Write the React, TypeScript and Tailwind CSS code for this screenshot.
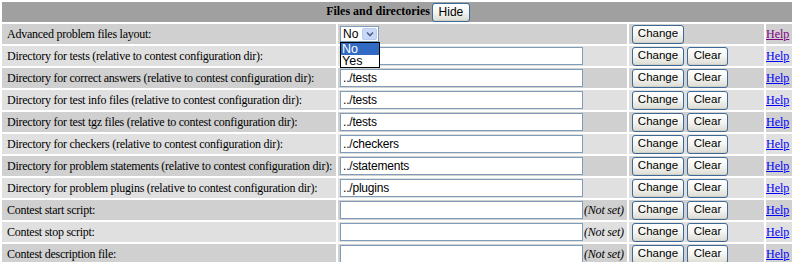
import React from "react";

type Row = {
  label: string;
  value: string;
  notSet?: boolean;
};

const rows: Row[] = [
  { label: "Directory for tests (relative to contest configuration dir):", value: "" },
  { label: "Directory for correct answers (relative to contest configuration dir):", value: "../tests" },
  { label: "Directory for test info files (relative to contest configuration dir):", value: "../tests" },
  { label: "Directory for test tgz files (relative to contest configuration dir):", value: "../tests" },
  { label: "Directory for checkers (relative to contest configuration dir):", value: "../checkers" },
  { label: "Directory for problem statements (relative to contest configuration dir):", value: "../statements" },
  { label: "Directory for problem plugins (relative to contest configuration dir):", value: "../plugins" },
  { label: "Contest start script:", value: "", notSet: true },
  { label: "Contest stop script:", value: "", notSet: true },
  { label: "Contest description file:", value: "", notSet: true },
];

function XpButton({ children, className = "" }: { children: React.ReactNode; className?: string }) {
  return (
    <button
      type="button"
      className={`h-[19px] rounded-[3px] border border-[#3d6a98] bg-gradient-to-b from-white via-[#f4f4f0] to-[#dcdcd4] p-0 align-middle font-['Liberation_Sans',Arial,sans-serif] text-[11.5px] font-normal leading-none tracking-normal text-black shadow-[inset_0_-1px_0_#cfcfc6] ${className}`}
    >
      {children}
    </button>
  );
}

function HelpLink({ visited }: { visited?: boolean }) {
  return (
    <a href="#" className={`whitespace-nowrap underline ${visited ? "text-[#800080]" : "text-[#0000ff]"}`}>
      Help
    </a>
  );
}

export default function App() {
  return (
    <div className="h-[262px] w-[800px] overflow-hidden bg-white font-['Liberation_Serif','Times_New_Roman',serif] text-[12px] text-black">
      <table className="w-[794px] table-fixed border-separate border-spacing-[2px]">
        <colgroup>
          <col className="w-[334px]" />
          <col className="w-[289px]" />
          <col className="w-[135px]" />
          <col className="w-[26px]" />
        </colgroup>
        <tbody>
          <tr>
            <td colSpan={4} className="h-[19px] bg-[#a0a0a0] p-0 pl-[2px] text-center align-middle font-bold">
              Files and directories
              <XpButton className="ml-[2px] w-[38px] text-[12px]">Hide</XpButton>
            </td>
          </tr>

          <tr className="bg-[#d0d0d0]">
            <td className="h-[20px] whitespace-nowrap p-0 pl-[5px] align-middle tracking-[-0.25px]">
              Advanced problem files layout:
            </td>
            <td className="p-0 pl-[2px] align-middle">
              <div className="relative h-[16px] w-[39px]">
                <div className="flex h-[16px] w-[39px] items-center border border-[#7f9db9] bg-white">
                  <span className="flex-1 pl-[2px] font-['Liberation_Sans',Arial,sans-serif] text-[12px] leading-none">No</span>
                  <span className="mr-[1px] flex h-[12px] w-[15px] items-center justify-center rounded-[2px] border border-[#b9c9ef] bg-[#c8d8fa]">
                    <svg width="8" height="6" viewBox="0 0 8 6">
                      <path d="M1 1.5 L4 4.5 L7 1.5" fill="none" stroke="#4d6185" strokeWidth="1.6" />
                    </svg>
                  </span>
                </div>
                <div className="absolute left-0 top-[16px] z-10 w-[40px] border border-black bg-white font-['Liberation_Sans',Arial,sans-serif] text-[12.5px] leading-[12px]">
                  <div className="bg-[#316ac5] pl-[1px] text-white">No</div>
                  <div className="pl-[1px]">Yes</div>
                </div>
              </div>
            </td>
            <td className="p-0 pl-[3px] align-middle">
              <XpButton className="w-[52px]">Change</XpButton>
            </td>
            <td className="p-0 align-middle">
              <HelpLink visited />
            </td>
          </tr>

          {rows.map((r, i) => (
            <tr key={r.label} className={i % 2 === 0 ? "bg-[#e0e0e0]" : "bg-[#d0d0d0]"}>
              <td className="h-[20px] whitespace-nowrap p-0 pl-[5px] align-middle tracking-[-0.25px]">{r.label}</td>
              <td className="whitespace-nowrap p-0 pl-[2px] align-middle">
                <input
                  type="text"
                  defaultValue={r.value}
                  className="h-[18px] w-[243px] border border-[#7f9db9] bg-white px-[2px] align-middle font-['Liberation_Sans',Arial,sans-serif] text-[12px] tracking-[-0.2px] outline-none"
                />
                {r.notSet && <i className="ml-[1px] align-middle tracking-[-0.2px]">(Not set)</i>}
              </td>
              <td className="whitespace-nowrap p-0 pl-[3px] align-middle">
                <XpButton className="w-[52px]">Change</XpButton>
                <XpButton className="ml-[3px] w-[41px]">Clear</XpButton>
              </td>
              <td className="p-0 align-middle">
                <HelpLink />
              </td>
            </tr>
          ))}
        </tbody>
      </table>
    </div>
  );
}
